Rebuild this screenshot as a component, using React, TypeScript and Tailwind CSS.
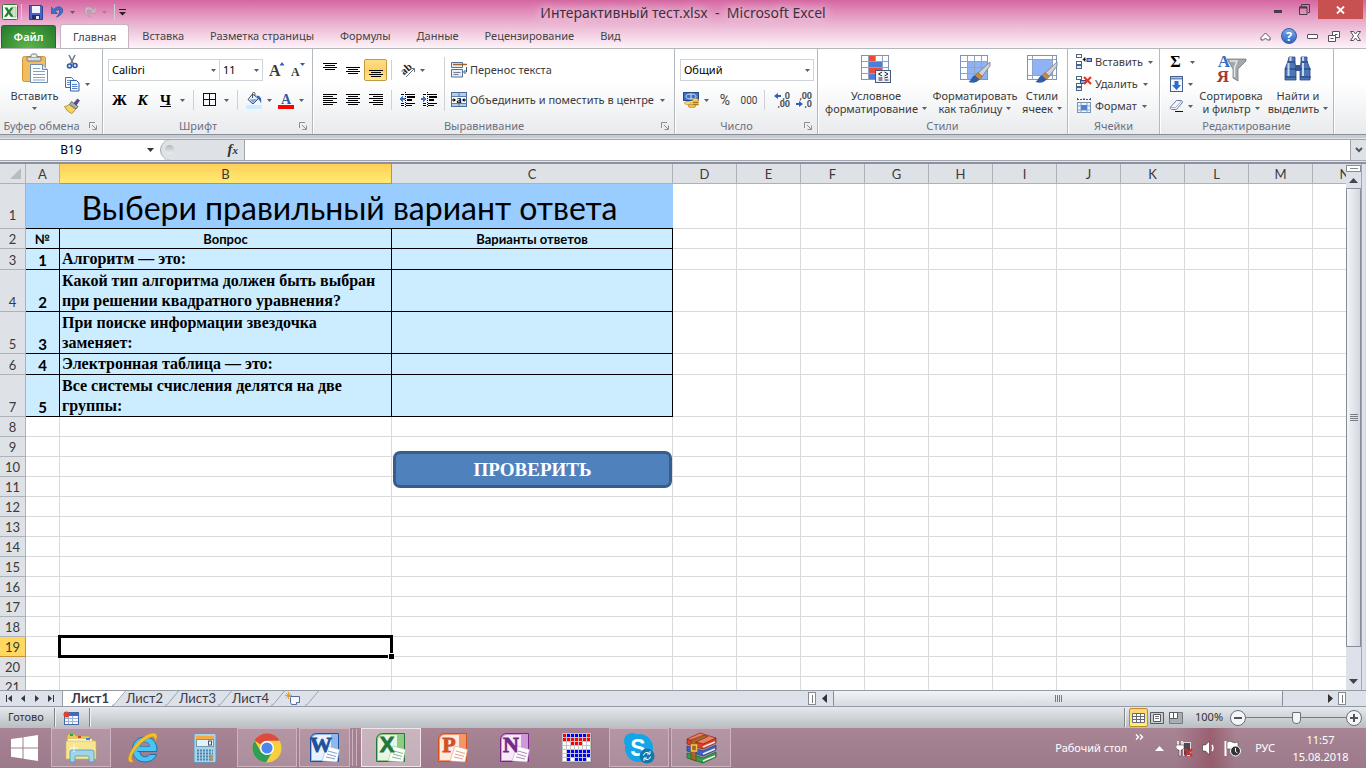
import React, { useState } from 'react';

type IconProps = { className?: string };

const Arrow = ({ className = '' }: IconProps) => (
  <svg className={`shrink-0 ${className}`} width="5" height="3" viewBox="0 0 5 3" aria-hidden="true">
    <path d="M0 0h5L2.5 3z" fill="#5c6066" />
  </svg>
);

/* ---------- Ribbon icons ---------- */

const ExcelSmall = () => (
  <svg width="16" height="16" viewBox="0 0 16 16">
    <rect x=".5" y=".5" width="15" height="15" rx="1" fill="#f4faf1" stroke="#2f7a35" />
    <path d="M10 3h4v10h-4z" fill="#cfe6c8" stroke="#7fb37c" strokeWidth=".6" />
    <path d="M2.500 3.500h3L7 6.300l1.800-2.800h2.600L8.300 8l3.200 4.700h-3L6.700 9.800 4.800 12.700H2L5.300 8z" fill="#1f7d33" />
  </svg>
);

const SaveIcon = () => (
  <svg width="14" height="15" viewBox="0 0 14 15">
    <path d="M.5 .5h12l1 1v13H.5z" fill="#4a64c0" stroke="#2e3f96" />
    <rect x="3" y="1" width="8" height="7" fill="#eef3fc" />
    <rect x="3" y="10" width="8" height="4" fill="#243070" />
    <rect x="7" y="11" width="3" height="3" fill="#e7ecf8" />
  </svg>
);

const UndoIcon = ({ muted = false }: { muted?: boolean }) => (
  <svg width="13" height="14" viewBox="0 0 14 14" className={muted ? '-scale-x-100' : ''}>
    <path d="M0 1.500v7h7L4.800 6.300C6.500 4 9 4 9.300 6c.2 1.800-1 4-3.300 6.500C10 11 13 8 12.500 4.800 12 .8 6.500 0 3 4.300z" fill={muted ? '#c7b3bf' : '#3c74cc'} stroke={muted ? '#ab95a3' : '#244e94'} strokeWidth=".7" />
  </svg>
);

const PasteIcon = () => (
  <svg width="28" height="32" viewBox="0 0 28 32">
    <rect x="1.500" y="3.500" width="23" height="25" rx="2" fill="#f2bd5c" stroke="#cf9537" />
    <rect x="6" y="4" width="14" height="4" rx="1" fill="#d8dde2" stroke="#6f7780" />
    <path d="M10 4V2.500a1.500 1.500 0 0 1 1.500-1.500h3A1.500 1.500 0 0 1 16 2.500V4" fill="#eceff2" stroke="#6f7780" />
    <path d="M9.500 11.500h12l5 5v13h-17z" fill="#fbfdff" stroke="#6d8bb3" />
    <path d="M21.500 11.500v5h5" fill="#dbe6f4" stroke="#6d8bb3" />
    <path d="M12 15.500h7M12 18.500h12M12 21.500h12M12 24.500h12M12 27h12" stroke="#8aa0bd" />
  </svg>
);

const CutIcon = () => (
  <svg width="16" height="16" viewBox="0 0 16 16">
    <path d="M5 1l4.500 9M11 1L6.500 10" stroke="#6b7785" strokeWidth="1.500" fill="none" />
    <circle cx="5.500" cy="12" r="2" fill="#dfe9f9" stroke="#2c56b0" strokeWidth="1.600" />
    <circle cx="11" cy="11.500" r="2" fill="#dfe9f9" stroke="#2c56b0" strokeWidth="1.600" />
  </svg>
);

const CopyIcon = () => (
  <svg width="16" height="16" viewBox="0 0 16 16">
    <path d="M1.500 1.500h6l2 2v8h-8z" fill="#f5f9ff" stroke="#456db0" />
    <path d="M3 4.500h4M3 6.500h4M3 8.500h4" stroke="#6c8fc9" />
    <path d="M6.500 4.500h6l2.500 2.500v8h-8.500z" fill="#f5f9ff" stroke="#3560aa" />
    <path d="M8 8.500h5M8 10.500h5.500M8 12.500h5.500" stroke="#5a81c2" />
  </svg>
);

const BrushIcon = () => (
  <svg width="16" height="16" viewBox="0 0 16 16">
    <path d="M13.500 1l2 1.500L12 7.500 9.500 5.500z" fill="#5a4a9a" stroke="#3b3170" strokeWidth=".6" />
    <path d="M7.500 3.500l6.500 5-2 2.500-6.500-4.500z" fill="#a9afb8" stroke="#4d5258" strokeWidth=".8" />
    <path d="M5 6.500l6.500 4.800q-1.500 3-4 4.200Q3 14 .5 8.500 3 8.500 5 6.500z" fill="#f3d566" stroke="#a98425" strokeWidth=".8" />
  </svg>
);

const BordersIcon = () => (
  <svg width="14" height="14" viewBox="0 0 14 14" shapeRendering="crispEdges">
    <path d="M.5 .5h12v12H.5zM6.500 .5v12M.5 6.500h12" fill="none" stroke="#111" />
  </svg>
);

const FillIcon = () => (
  <svg width="16" height="17" viewBox="0 0 16 17">
    <path d="M6.500 2l6 4.500-5.500 5.500L2 7.500z" fill="#e8f1fb" stroke="#3a4f78" />
    <path d="M3.500 7.500L11.500 7 7 11z" fill="#7fa6dd" />
    <path d="M6.500 6V1.500a1.200 1.200 0 0 1 2.400 0V4" fill="none" stroke="#4a5460" />
    <path d="M10.500 3.500c4.500 0 5.300 4 4.500 8-.9-2.500-2-4-3-4.500z" fill="#2f62b8" />
    <rect y="13" width="16" height="4" fill="#ccecff" />
  </svg>
);

const FontColorIcon = () => (
  <svg width="16" height="18" viewBox="0 0 16 18">
    <text x="8" y="13" textAnchor="middle" fontFamily="Liberation Serif" fontWeight="700" fontSize="14" fill="#38599f">A</text>
    <rect y="14" width="16" height="4" fill="#f00" />
  </svg>
);

type LinesProps = { rows: number[][]; top?: number };
const Lines = ({ rows, top = 2 }: LinesProps) => (
  <svg width="14" height="16" viewBox="0 0 14 16" shapeRendering="crispEdges">
    {rows.map(([x, w], i) => (
      <rect key={i} x={x} y={top + i * 2} width={w} height="1" fill="#000" />
    ))}
  </svg>
);

const OrientIcon = () => (
  <svg width="16" height="16" viewBox="0 0 16 16" className="overflow-visible">
    <text x="2" y="12" transform="rotate(-42 5 10)" fontFamily="Liberation Serif" fontWeight="700" fontSize="11" fill="#222">ab</text>
    <path d="M6 15l8-8M11 6.500h3.500V10" fill="none" stroke="#6d737b" />
  </svg>
);

const IndentIcon = ({ right = false }: { right?: boolean }) => (
  <svg width="16" height="16" viewBox="0 0 16 16" shapeRendering="crispEdges">
    <path d="M2 2.500h3M7 2.500h9M2 13.500h3M7 13.500h6M2 11.500h3M7 11.500h9" stroke="#000" />
    <path d="M8 5h8M8 8h5" stroke="#000" strokeWidth="2" />
    <path d="M6.500 0v16" stroke="#000" strokeDasharray="1 1" />
    <path d={right ? 'M0 6h2V4l4 3-4 3V8H0z' : 'M6 6H4V4L0 7l4 3V8h2z'} fill="#3b6fd0" />
  </svg>
);

const WrapIcon = () => (
  <svg width="17" height="16" viewBox="0 0 17 16">
    <path d="M.5 .5h11v5H.5zM.5 7.500h11v7.500H.5z" fill="#e6eef8" stroke="#55708f" />
    <path d="M2 2.500h14" stroke="#a0632a" strokeWidth="1.500" />
    <path d="M2.500 10.500h7M2.500 12.500h5" stroke="#6d7f94" />
    <path d="M15.500 5v5h-2m1-2l-2 2 2 2" fill="none" stroke="#3c5680" />
  </svg>
);

const MergeIcon = () => (
  <svg width="16" height="16" viewBox="0 0 16 16">
    <rect x=".5" y=".5" width="15" height="14" fill="#b8cce6" stroke="#4c6d9c" />
    <path d="M8 .5v4M8 11.500v3M.5 4.500h15M.5 11.500h15" stroke="#5b7cab" />
    <rect x="1" y="5" width="14" height="6" fill="#fff" />
    <text x="8" y="10.500" textAnchor="middle" fontFamily="Liberation Serif" fontWeight="700" fontSize="10" fill="#000">a</text>
    <path d="M1 8h3M12 8h3" stroke="#000" />
    <path d="M2.500 6l2.500 2-2.500 2zM13.500 6L11 8l2.500 2z" fill="#000" />
  </svg>
);

const MoneyIcon = () => (
  <svg width="17" height="16" viewBox="0 0 17 16">
    <rect x=".5" y=".5" width="15" height="8" fill="#3c72c4" stroke="#244c8d" />
    <ellipse cx="8" cy="4.500" rx="5" ry="2.500" fill="none" stroke="#d5e3f6" />
    <path d="M8 2v5" stroke="#d5e3f6" />
    <ellipse cx="12.500" cy="8" rx="3" ry="1.500" fill="#ffe07a" stroke="#a97818" strokeWidth=".6" />
    <path d="M9.500 8.500h6v5h-6z" fill="#eeb62e" />
    <path d="M9.500 10.500h6M9.500 12.500h6" stroke="#a97818" />
    <ellipse cx="5" cy="11" rx="3.500" ry="1.500" fill="#ffe07a" stroke="#a97818" strokeWidth=".6" />
    <ellipse cx="9" cy="14" rx="4" ry="1.500" fill="#f3c64a" stroke="#a97818" strokeWidth=".6" />
  </svg>
);

const DecimalIcon = ({ less = false }: { less?: boolean }) => (
  <svg width="17" height="16" viewBox="0 0 17 16">
    <g fontFamily="Roboto" fontSize="9" fontWeight="700" fill="#4a4e55" textAnchor="end">
      <text x="16" y="7">{less ? ',00' : ',0'}</text>
      <text x="16" y="15">{less ? ',0' : ',00'}</text>
    </g>
    <path d={less ? 'M0 11h3V9l4 3-4 3v-2H0z' : 'M7 3H4V1L0 4l4 3V5h3z'} fill="#2d5fc0" />
  </svg>
);

const GridBase = ({ children }: { children?: React.ReactNode }) => (
  <svg width="32" height="32" viewBox="0 0 32 32">
    <rect x="1.500" y="2.500" width="27" height="24" fill="#fdfeff" stroke="#7f95b8" />
    <path d="M8.500 3v24M15.500 3v24M22.500 3v24M2 8.500h26M2 14.500h26M2 20.500h26" stroke="#8fa4c4" />
    {children}
  </svg>
);

const PaintBrush = () => (
  <g>
    <path d="M31 9L19 20l4 3.500L31 13z" fill="#cfd2d6" stroke="#74797f" strokeWidth=".8" />
    <path d="M19 19.500l4.500 4-3.500 3.500-4.500-4z" fill="#c58a45" stroke="#8b5a22" strokeWidth=".6" />
    <path d="M16 22.500c-3 0-3 4-6.500 6.500 5 1.500 9 .5 11-2.500z" fill="#2f5fa8" />
  </g>
);

const CondIcon = () => (
  <GridBase>
    <path d="M9 3h6v5H9zM9 15h13v5H9z" fill="#f04a35" />
    <path d="M9 9h13v5H9zM9 21h6v5H9z" fill="#4b7ddb" />
    <rect x="15.500" y="17.500" width="15" height="12" fill="#f1f5fb" stroke="#44597a" />
    <path d="M22 19l-3.500 2 3.500 2M18.500 25h4M18.500 27h4M24.500 19l3.500 2-3.500 2M24.500 25l3.500-1M24.500 27h4" stroke="#222" fill="none" />
  </GridBase>
);

const TableFormatIcon = () => (
  <GridBase>
    <path d="M9 9h6v5H9zM16 9h6v5h-6zM23 9h5v5h-5zM9 15h6v5H9zM16 15h6v5h-6zM9 21h6v5H9zM16 21h6v5h-6zM23 15h5v11h-5z" fill="#8fb3f5" />
    <PaintBrush />
  </GridBase>
);

const CellStyleIcon = () => (
  <svg width="32" height="32" viewBox="0 0 32 32">
    <rect x="1.500" y="2.500" width="29" height="24" fill="#fdfeff" stroke="#7f95b8" />
    <path d="M6.500 3v24M26.500 3v24M2 6.500h28M2 22.500h28" stroke="#8fa4c4" />
    <rect x="7" y="7" width="19" height="15" fill="#8fb3f5" />
    <PaintBrush />
  </svg>
);

const CellsIcon = ({ kind }: { kind: 'insert' | 'delete' | 'format' }) => (
  <svg width="16" height="16" viewBox="0 0 16 16">
    {kind === 'format' ? (
      <>
        <path d="M1 1.500h14M1.500 0v3M8 0v3M14.500 0v3" stroke="#35557e" strokeDasharray="2 1" />
        <rect x="1.500" y="4.500" width="13" height="10" fill="#edf3fb" stroke="#7c93b3" />
        <path d="M5 5v10M11 5v10M2 8h12M2 12h12" stroke="#8ba3c5" />
        <rect x="5" y="7" width="6" height="5" fill="#4e7fd4" />
      </>
    ) : (
      <>
        <rect x=".5" y=".5" width="5" height="3" fill="#fff" stroke="#4c6585" />
        <rect x=".5" y="7.500" width="5" height="3" fill="#fff" stroke="#4c6585" />
        <rect x=".5" y="11.500" width="5" height="3" fill="#dce8f7" stroke="#4c6585" />
        {kind === 'insert' ? (
          <>
            <path d="M7 5.500h3M9 3.500L7 5.500 9 7.500z" fill="#111" stroke="#111" strokeWidth=".6" />
            <rect x="11" y="4.500" width="4.500" height="3" fill="#89aee8" stroke="#2f4f85" />
          </>
        ) : (
          <>
            <rect x="4.500" y="4.500" width="5" height="3" fill="#89aee8" stroke="#2f4f85" />
            <path d="M8 1l7 7M15 1L8 8" stroke="#e0392b" strokeWidth="2.200" />
          </>
        )}
      </>
    )}
  </svg>
);

const FillDownIcon = () => (
  <svg width="14" height="16" viewBox="0 0 14 16">
    <rect x=".5" y=".5" width="12" height="15" fill="#f3f7fd" stroke="#44618d" />
    <path d="M1 2.500h11" stroke="#6d8dbb" strokeWidth="2" />
    <path d="M4.500 5h4v4h2.500l-4.500 5L2 9h2.500z" fill="#2f68cf" />
  </svg>
);

const EraserIcon = () => (
  <svg width="15" height="14" viewBox="0 0 15 14">
    <path d="M7.500 1.500h5q1.500 1 .5 2.500l-5.500 6.500h-5Q.5 9.500 1.500 8z" fill="#f4f6fb" stroke="#6b7ea3" />
    <path d="M1.500 8.500h5l6-6.500" fill="none" stroke="#a3b1cc" />
    <path d="M6 12.500h8" stroke="#111" />
  </svg>
);

const SortIcon = () => (
  <svg width="32" height="32" viewBox="0 0 32 32">
    <text x="9" y="14" textAnchor="middle" fontFamily="Liberation Serif" fontWeight="700" fontSize="17" fill="#3b6cb9">A</text>
    <text x="8" y="29" textAnchor="middle" fontFamily="Liberation Serif" fontWeight="700" fontSize="17" fill="#a23b35">Я</text>
    <path d="M12 6h19v2l-8 8v12l-5-3v-9z" fill="#a4a8ad" stroke="#74797f" strokeWidth=".8" />
    <path d="M15 8h7l-2.500 7v9" fill="none" stroke="#e3e5e8" strokeWidth="1.500" />
  </svg>
);

const FindIcon = () => (
  <svg width="30" height="32" viewBox="0 0 30 32">
    <path d="M6 4h6v5l1 7v11H2V16l3-8zM18 4h6v4l3 8v11H17V16l1-7z" fill="#4d76b8" stroke="#28467c" strokeWidth=".8" />
    <rect x="12" y="12" width="6" height="6" fill="#35578f" />
    <path d="M5 9h7M18 9h7M2 16h11M17 16h11M2 24h11M17 24h11" stroke="#203a69" />
    <path d="M5.500 10v13M20 10v13M7.500 4v4M20 4v4" stroke="#c4d7f3" strokeWidth="2" />
  </svg>
);

const Launcher = () => (
  <svg width="9" height="9" viewBox="0 0 9 9" aria-hidden="true">
    <path d="M.5 6V.5H6M3 3l4 4M7.500 3.500v4h-4" fill="none" stroke="#8b9098" />
  </svg>
);

/* ---------- Ribbon building blocks ---------- */

interface GroupProps {
  title: string;
  className: string;
  launcher?: boolean;
  children: React.ReactNode;
}

const Group = ({ title, className, launcher, children }: GroupProps) => (
  <section className={`flex shrink-0 flex-col border-r border-[#b4b9bf] shadow-[1px_0_0_#fff] ${className}`}>
    <div className="flex h-[69px] px-[5px]">{children}</div>
    <div className="flex h-4 items-center text-[#6a7080]">
      <span className={`flex-1 text-center ${launcher ? 'pr-[6px]' : ''}`}>{title}</span>
      {launcher && <button aria-label={`${title}: параметры`} className="mr-1"><Launcher /></button>}
    </div>
  </section>
);

const Sep = ({ className = 'h-5' }: IconProps) => <span className={`w-px shrink-0 bg-[#cdd1d6] ${className}`} />;

const StatusSep = ({ className = '' }: IconProps) => (
  <span className={`h-[19px] w-px shrink-0 bg-[#80858b] shadow-[1px_0_0_#eef0f2] ${className}`} />
);

interface IconButtonProps {
  label: string;
  className?: string;
  children: React.ReactNode;
}

const IconButton = ({ label, className = 'w-[23px]', children }: IconButtonProps) => (
  <button aria-label={label} title={label} className={`flex h-[22px] shrink-0 items-center justify-center ${className}`}>
    {children}
  </button>
);

interface LargeButtonProps {
  icon: React.ReactNode;
  lines: string[];
  className: string;
}

const LargeButton = ({ icon, lines, className }: LargeButtonProps) => (
  <button className={`flex shrink-0 flex-col items-center pt-1 leading-[13px] whitespace-nowrap ${className}`}>
    <span className="flex h-9 items-start">{icon}</span>
    <span>{lines[0]}</span>
    <span className="flex items-center gap-1">{lines[1]}<Arrow /></span>
  </button>
);

const SmallButton = ({ icon, label }: { icon: React.ReactNode; label: string }) => (
  <button className="flex h-[22px] items-center gap-[3px]">
    {icon}
    <span>{label}</span>
    <Arrow className="ml-[2px]" />
  </button>
);

const CENTER_LINES = [[0, 14], [2, 10], [0, 14], [2, 10], [0, 14], [2, 10]];
const LEFT_LINES = [[0, 14], [0, 10], [0, 14], [0, 10], [0, 14], [0, 10]];
const RIGHT_LINES = [[0, 14], [4, 10], [0, 14], [4, 10], [0, 14], [4, 10]];
const FOUR_LINES = [[0, 14], [2, 10], [0, 14], [2, 10]];

const Ribbon = () => (
  <div className="flex h-[86px] shrink-0 overflow-hidden border-b border-[#8b9097] bg-linear-to-b from-white from-40% to-[#e8eaed] text-[11px] text-[#3b3b3b]">
    <Group title="Буфер обмена" className="w-[103px]" launcher>
      <button className="flex w-[59px] flex-col items-center pt-1 leading-[13px]">
        <span className="flex h-9"><PasteIcon /></span>
        <span>Вставить</span>
        <span className="flex h-[13px] items-center"><Arrow /></span>
      </button>
      <div className="flex flex-col pt-[2px]">
        <IconButton label="Вырезать" className="w-4"><CutIcon /></IconButton>
        <IconButton label="Копировать" className="w-[26px] gap-[5px]"><CopyIcon /><Arrow /></IconButton>
        <IconButton label="Формат по образцу" className="w-4"><BrushIcon /></IconButton>
      </div>
    </Group>

    <Group title="Шрифт" className="w-[210px]" launcher>
      <div className="flex flex-col gap-2 pt-[10px]">
        <div className="flex">
          <button aria-label="Шрифт Calibri" className="flex h-[22px] w-28 items-center justify-between border border-[#d0d3d8] bg-white px-[3px] text-black">
            Calibri<Arrow />
          </button>
          <button aria-label="Размер шрифта 11" className="-ml-px flex h-[22px] w-11 items-center justify-between border border-[#d0d3d8] bg-white px-[3px] text-black">
            11<Arrow />
          </button>
          <IconButton label="Увеличить размер шрифта" className="ml-1 w-5">
            <svg width="16" height="16" viewBox="0 0 16 16">
              <text x="0" y="14" fontFamily="Liberation Serif" fontWeight="700" fontSize="16" fill="#3a3a3a">A</text>
              <path d="M10.500 3.500h5L13 0z" fill="#2f5fb5" />
            </svg>
          </IconButton>
          <IconButton label="Уменьшить размер шрифта" className="w-6">
            <svg width="16" height="16" viewBox="0 0 16 16">
              <text x="0" y="14" fontFamily="Liberation Serif" fontWeight="700" fontSize="12" fill="#3a3a3a">A</text>
              <path d="M9 1h5l-2.500 3z" fill="#2f5fb5" />
            </svg>
          </IconButton>
        </div>
        <div className="flex items-center font-['Liberation_Serif',serif] text-[15px] font-bold text-black">
          <IconButton label="Полужирный">Ж</IconButton>
          <IconButton label="Курсив"><i>К</i></IconButton>
          <IconButton label="Подчеркнутый" className="w-[37px] gap-[9px]"><u>Ч</u><Arrow /></IconButton>
          <Sep className="ml-[2px] h-5" />
          <IconButton label="Границы" className="ml-px w-[41px] gap-[7px]"><BordersIcon /><Arrow /></IconButton>
          <Sep className="ml-px h-5" />
          <IconButton label="Цвет заливки" className="ml-[5px] w-8 gap-[5px]"><FillIcon /><Arrow /></IconButton>
          <IconButton label="Цвет текста" className="w-8 gap-[5px]"><FontColorIcon /><Arrow /></IconButton>
        </div>
      </div>
    </Group>

    <Group title="Выравнивание" className="w-[362px]" launcher>
      <div className="flex flex-col gap-2 pt-[10px]">
        <div className="flex items-center">
          <IconButton label="По верхнему краю"><Lines rows={FOUR_LINES} top={1} /></IconButton>
          <IconButton label="Выровнять по середине"><Lines rows={FOUR_LINES} top={5} /></IconButton>
          <IconButton label="По нижнему краю" className="w-[23px] rounded-[2px] border border-[#c29a43] bg-linear-to-b from-[#fbdf85] via-[#ffd062] to-[#ffe994]">
            <Lines rows={FOUR_LINES} top={8} />
          </IconButton>
          <Sep className="ml-1 h-5" />
          <IconButton label="Ориентация" className="ml-[6px] w-[28px] gap-1"><OrientIcon /><Arrow /></IconButton>
        </div>
        <div className="flex items-center">
          <IconButton label="По левому краю"><Lines rows={LEFT_LINES} /></IconButton>
          <IconButton label="По центру"><Lines rows={CENTER_LINES} /></IconButton>
          <IconButton label="По правому краю"><Lines rows={RIGHT_LINES} /></IconButton>
          <Sep className="ml-1 h-5" />
          <IconButton label="Уменьшить отступ" className="ml-1 w-[22px]"><IndentIcon /></IconButton>
          <IconButton label="Увеличить отступ" className="w-[22px]"><IndentIcon right /></IconButton>
        </div>
      </div>
      <Sep className="mt-2 ml-1 h-[54px]" />
      <div className="ml-[6px] flex flex-col gap-2 pt-[10px]">
        <button className="flex h-[22px] items-center gap-[2px]"><WrapIcon />Перенос текста</button>
        <button className="flex h-[22px] items-center gap-[3px] whitespace-nowrap"><MergeIcon />Объединить и поместить в центре<Arrow className="ml-[3px]" /></button>
      </div>
    </Group>

    <Group title="Число" className="w-[143px]" launcher>
      <div className="flex flex-col gap-2 pt-[10px]">
        <button className="flex h-[22px] w-[134px] items-center justify-between border border-[#d0d3d8] bg-white px-[3px] text-black">
          Общий<Arrow />
        </button>
        <div className="flex items-center">
          <IconButton label="Денежный формат" className="w-8 gap-1"><MoneyIcon /><Arrow /></IconButton>
          <IconButton label="Процентный формат" className="w-[26px] font-['Roboto',sans-serif] text-sm">%</IconButton>
          <IconButton label="Формат с разделителями" className="w-[22px] font-['Roboto',sans-serif] text-[10px]">000</IconButton>
          <Sep className="ml-1 h-5" />
          <IconButton label="Увеличить разрядность" className="ml-[6px] w-[22px]"><DecimalIcon /></IconButton>
          <IconButton label="Уменьшить разрядность" className="w-[22px]"><DecimalIcon less /></IconButton>
        </div>
      </div>
    </Group>

    <Group title="Стили" className="w-[250px]">
      <LargeButton className="w-[106px]" icon={<CondIcon />} lines={['Условное', 'форматирование']} />
      <LargeButton className="w-[92px]" icon={<TableFormatIcon />} lines={['Форматировать', 'как таблицу']} />
      <LargeButton className="w-[42px]" icon={<CellStyleIcon />} lines={['Стили', 'ячеек']} />
    </Group>

    <Group title="Ячейки" className="w-[92px]">
      <div className="flex flex-col pt-[2px] pl-[3px]">
        <SmallButton icon={<CellsIcon kind="insert" />} label="Вставить" />
        <SmallButton icon={<CellsIcon kind="delete" />} label="Удалить" />
        <SmallButton icon={<CellsIcon kind="format" />} label="Формат" />
      </div>
    </Group>

    <Group title="Редактирование" className="w-[174px]">
      <div className="flex w-8 shrink-0 flex-col pt-[2px]">
        <IconButton label="Сумма" className="w-8 gap-[9px] pl-[3px] font-['Liberation_Serif',serif] text-base font-bold text-black">Σ<Arrow /></IconButton>
        <IconButton label="Заполнить" className="w-8 gap-1"><FillDownIcon /><Arrow /></IconButton>
        <IconButton label="Очистить" className="w-8 gap-1"><EraserIcon /><Arrow /></IconButton>
      </div>
      <LargeButton className="w-[68px]" icon={<SortIcon />} lines={['Сортировка', 'и фильтр']} />
      <LargeButton className="w-[66px]" icon={<FindIcon />} lines={['Найти и', 'выделить']} />
    </Group>
  </div>
);

/* ---------- Window header ---------- */

const TABS = ['Главная', 'Вставка', 'Разметка страницы', 'Формулы', 'Данные', 'Рецензирование', 'Вид'];

const TitleBar = () => (
  <div className="relative flex h-[25px] items-start justify-between">
    <div className="flex h-6 items-center pl-[2px]">
      <ExcelSmall />
      <Sep className="ml-[3px] h-4" />
      <button aria-label="Сохранить" className="ml-[7px]"><SaveIcon /></button>
      <button aria-label="Отменить" className="ml-2 flex items-center gap-[6px]"><UndoIcon /><Arrow /></button>
      <button aria-label="Вернуть" disabled className="ml-2 flex items-center gap-[6px]"><UndoIcon muted /><Arrow className="opacity-40" /></button>
      <Sep className="ml-[7px] h-4" />
      <button aria-label="Настройка панели быстрого доступа" className="ml-1">
        <svg width="7" height="8" viewBox="0 0 7 8"><path d="M0 1.500h7" stroke="#222" /><path d="M0 4h7L3.500 7.500z" fill="#222" /></svg>
      </button>
    </div>
    <h1 className="pointer-events-none absolute inset-x-0 top-0 text-center text-[14px] leading-[25px] text-[#3d3040] [text-shadow:0_0_8px_#f7d9e9,0_0_12px_#f7d9e9]">
      Интерактивный тест.xlsx&nbsp; -&nbsp; Microsoft Excel
    </h1>
    <div className="flex h-[19px] pr-[3px]">
      <button aria-label="Свернуть" className="flex w-[26px] items-center justify-center pt-1"><span className="h-[3px] w-2 bg-[#4b3a45]" /></button>
      <button aria-label="Восстановить" className="flex w-[27px] items-center justify-center">
        <svg width="11" height="11" viewBox="0 0 11 11"><path d="M2.500 2V.5h8v8H9M.5 3h7.500v7.500H.5z" fill="none" stroke="#4b3a45" /><path d="M.5 3.500H8" stroke="#4b3a45" strokeWidth="2" /></svg>
      </button>
      <button aria-label="Закрыть" className="flex w-[45px] items-center justify-center bg-[#c75050]">
        <svg width="9" height="8" viewBox="0 0 9 8"><path d="M1 .5l7 7M8 .5l-7 7" stroke="#fff" strokeWidth="1.800" /></svg>
      </button>
    </div>
  </div>
);

const TabRow = () => {
  const [active, setActive] = useState('Главная');
  return (
    <nav className="flex h-6 items-end text-[11px] text-[#444]">
      <button className="ml-px h-[23px] w-[55px] rounded-t-[3px] border border-b-0 border-[#1f6a2c] bg-radial-[at_50%_100%] from-[#5fb548] to-[#237a2c] font-semibold text-white">
        Файл
      </button>
      <div className="ml-1 flex h-full flex-1">
        {TABS.map((tab) => (
          <button
            key={tab}
            onClick={() => setActive(tab)}
            className={`h-6 pt-px ${active === tab ? 'rounded-t-[3px] border border-b-0 border-[#c9b3c0] bg-white px-3' : 'px-[13px]'}`}
          >
            {tab}
          </button>
        ))}
      </div>
      <div className="flex h-full items-center gap-[10px] pr-[5px]">
        <button aria-label="Свернуть ленту">
          <svg width="11" height="9" viewBox="0 0 11 9"><path d="M1 5.500L5.500 1 10 5.500V8H7.500L5.500 6 3.500 8H1z" fill="#fff" stroke="#57505a" /></svg>
        </button>
        <button aria-label="Справка" className="flex size-4 items-center justify-center rounded-full border border-[#2f5ca8] bg-linear-to-b from-[#7ba6e6] to-[#2d66c0] text-[13px] leading-none font-bold text-white">?</button>
        <button aria-label="Свернуть окно" className="h-[5px] w-[11px] rounded-[1px] border border-[#57505a] bg-white" />
        <button aria-label="Восстановить окно">
          <svg width="12" height="11" viewBox="0 0 12 11"><path d="M4.500 .5h7v6h-7z" fill="#fff" stroke="#57505a" /><path d="M.5 4.500h7v6h-7z" fill="#fff" stroke="#57505a" /><path d="M2.500 7.500h3M7 3.500h2.500" fill="none" stroke="#57505a" /></svg>
        </button>
        <button aria-label="Закрыть окно">
          <svg width="11" height="10" viewBox="0 0 11 10"><path d="M.5 .5h3l2 2.500 2-2.500h3L7.500 5l3 4.500h-3L5.500 7l-2 2.500h-3L3.500 5z" fill="#fff" stroke="#57505a" /></svg>
        </button>
      </div>
    </nav>
  );
};

const FormulaBar = () => (
  <div className="flex h-7 shrink-0 items-center border-b border-[#8b8fa0] bg-[#e3e6ec] pt-[2px] shadow-[inset_0_3px_0_#c6cbd2]">
    <div className="flex h-[22px] w-full border-y border-[#a0a4ab] bg-[#dee2e7]">
      <input aria-label="Поле имени" defaultValue="B19" className="w-[142px] bg-white text-center text-xs text-black outline-none" />
      <button aria-label="Список имён" className="flex w-[22px] items-center justify-start bg-white pl-[5px]">
        <svg width="7" height="4" viewBox="0 0 7 4"><path d="M0 0h7L3.500 4z" fill="#333" /></svg>
      </button>
      <div className="-ml-1 flex w-[84px] items-center justify-between rounded-l-full border-l border-[#a0a4ab] bg-[#dee2e7] pr-[6px] pl-1">
        <span className="size-[9px] rounded-full bg-linear-to-b from-[#b4b8bd] to-[#eef0f2]" />
        <button aria-label="Вставить функцию" className="font-['Liberation_Serif',serif] text-[15px] leading-none font-bold text-[#333] italic">
          f<span className="text-[11px]">x</span>
        </button>
      </div>
      <input aria-label="Строка формул" className="min-w-0 flex-1 border-l border-[#a0a4ab] bg-white px-1 text-xs outline-none" />
      <button aria-label="Развернуть строку формул" className="flex w-4 items-center justify-center border-l border-[#a0a4ab] bg-[#dee2e7]">
        <svg width="8" height="6" viewBox="0 0 8 6"><path d="M1 1l3 3 3-3" fill="none" stroke="#555" strokeWidth="2" /></svg>
      </button>
    </div>
  </div>
);

/* ---------- Sheet ---------- */

const COLUMNS = ['A', 'B', 'C', 'D', 'E', 'F', 'G', 'H', 'I', 'J', 'K', 'L', 'M', 'N'];
const BLANK_COLUMNS = COLUMNS.slice(3);
const EMPTY_ROWS = [8, 9, 10, 11, 12, 13, 14, 15, 16, 17, 18, 19, 20, 21];

const QUESTIONS = [
  { row: 3, num: 1, text: 'Алгоритм — это:', height: 'h-[21px]' },
  { row: 4, num: 2, text: 'Какой тип алгоритма должен быть выбран при решении квадратного уравнения?', height: 'h-[42px]' },
  { row: 5, num: 3, text: 'При поиске информации звездочка заменяет:', height: 'h-[42px]' },
  { row: 6, num: 4, text: 'Электронная таблица — это:', height: 'h-[21px]' },
  { row: 7, num: 5, text: 'Все системы счисления делятся на две группы:', height: 'h-[42px]' },
];

const RowHead = ({ n, selected = false }: { n: number; selected?: boolean }) => (
  <th
    scope="row"
    className={`border-r border-b px-0 pt-0 text-center align-bottom text-[13px] leading-[18px] font-normal text-[#3a3a3a] ${n === 1 ? 'pb-1' : 'pb-0'} ${
      selected ? 'border-[#c59334] bg-[#ffd95f]' : 'border-[#adb2b8] bg-[#dee2e7]'
    }`}
  >
    {n}
  </th>
);

const Blanks = () => (
  <>
    {BLANK_COLUMNS.map((c) => (
      <td key={c} className="border-r border-b border-[#d8dadc]" />
    ))}
  </>
);

const Sheet = () => (
  <div className="min-w-0 flex-1 overflow-hidden bg-white">
    <table className="w-[1377px] table-fixed border-separate border-spacing-0 font-['Lato',sans-serif] text-black">
      <colgroup>
        <col className="w-[26px]" />
        <col className="w-[34px]" />
        <col className="w-[332px]" />
        <col className="w-[281px]" />
        {BLANK_COLUMNS.map((c) => <col key={c} className="w-[64px]" />)}
      </colgroup>
      <thead>
        <tr className="h-5 text-[13px] text-[#3a3a3a]">
          <td className="border-r border-b border-[#adb2b8] bg-[#dee2e7] p-0">
            <svg className="mr-1 ml-auto" width="11" height="11" viewBox="0 0 11 11"><path d="M11 0v11H0z" fill="#b9bdc2" /></svg>
          </td>
          {COLUMNS.map((c) => (
            <th
              key={c}
              scope="col"
              className={`border-r border-b p-0 leading-[18px] font-normal ${
                c === 'B' ? 'border-[#c59334] bg-linear-to-b from-[#ffcf58] to-[#ffeb70]' : 'border-[#adb2b8] bg-[#dee2e7]'
              }`}
            >
              {c}
            </th>
          ))}
        </tr>
      </thead>
      <tbody>
        <tr className="h-[45px]">
          <RowHead n={1} />
          <td colSpan={3} className="border-b border-black bg-[#99ccff] p-0 text-center align-bottom text-[32px] leading-[40px]">
            Выбери правильный вариант ответа
          </td>
          <Blanks />
        </tr>
        <tr className="h-5 text-[13px] leading-[18px]">
          <RowHead n={2} />
          {['№', 'Вопрос', 'Варианты ответов'].map((h) => (
            <th key={h} className="border-r border-b border-black bg-[#ccecff] p-0">{h}</th>
          ))}
          <Blanks />
        </tr>
        {QUESTIONS.map((q) => (
          <tr key={q.row} className={q.height}>
            <RowHead n={q.row} />
            <td className="border-r border-b border-black bg-[#ccecff] p-0 text-center align-bottom text-[15px] leading-[18px] font-bold">{q.num}</td>
            <td className="border-r border-b border-black bg-[#ccecff] py-0 pr-2 pl-[2px] align-bottom font-['Liberation_Serif',serif] text-base leading-5 font-bold">{q.text}</td>
            <td className="border-r border-b border-black bg-[#ccecff]" />
            <Blanks />
          </tr>
        ))}
        {EMPTY_ROWS.map((n) => (
          <tr key={n} className="h-5">
            <RowHead n={n} selected={n === 19} />
            <td className="border-r border-b border-[#d8dadc]" />
            <td className="relative border-r border-b border-[#d8dadc] p-0">
              {n === 19 && (
                <div className="absolute -inset-[2px] z-10 border-[3px] border-black">
                  <span className="absolute -right-1 -bottom-1 size-[6px] border-t border-l border-white bg-black" />
                </div>
              )}
            </td>
            <td className="relative border-r border-b border-[#d8dadc] p-0">
              {n === 9 && (
                <button className="absolute top-[14px] left-px z-10 h-[37px] w-[279px] rounded-[7px] border-[3px] border-[#385d8a] bg-[#4f81bd] font-['Liberation_Serif',serif] text-[19px] leading-none font-bold text-white">
                  ПРОВЕРИТЬ
                </button>
              )}
            </td>
            <Blanks />
          </tr>
        ))}
      </tbody>
    </table>
  </div>
);

const VerticalScroll = () => (
  <div className="flex w-5 shrink-0 border-r border-[#d4d7dc] bg-[#dde1e9]">
    <div className="flex w-4 flex-col items-center border-r border-[#9fa5ae]">
      <span className="mt-px flex h-[7px] w-[15px] items-center justify-center border border-[#888d95] bg-white"><span className="h-px w-2 bg-[#888]" /></span>
      <button aria-label="Вверх" className="flex h-[17px] w-full items-center justify-center border-b border-[#8d939c]">
        <svg width="9" height="5" viewBox="0 0 9 5"><path d="M0 5h9L4.500 0z" fill="#444" /></svg>
      </button>
      <div className="flex w-full flex-1 flex-col items-center justify-center gap-px rounded-[1px] border border-t-0 border-[#868d97] bg-linear-to-r from-[#f2f4f8] to-[#d3d7df]">
        {[0, 1, 2, 3].map((i) => <span key={i} className="h-px w-2 bg-[#777c84]" />)}
      </div>
      <span className="h-[26px]" />
      <button aria-label="Вниз" className="flex h-[17px] w-full items-center justify-center">
        <svg width="9" height="5" viewBox="0 0 9 5"><path d="M0 0h9L4.500 5z" fill="#444" /></svg>
      </button>
    </div>
  </div>
);

const Slant = ({ white = false }: { white?: boolean }) => (
  <svg className="shrink-0" width="14" height="15" viewBox="0 0 14 15" aria-hidden="true">
    {white && <path d="M0 0h14L4 12q-2 2.500-4 2.500z" fill="#fff" />}
    <path d="M13.500 0L4 11.500q-2 3-4 3" fill="none" stroke="#9ba3af" />
  </svg>
);

const NAV_ARROWS = [
  { label: 'Первый лист', d: 'M1 0h1v7H1zM7 0v7L3 3.500z' },
  { label: 'Предыдущий лист', d: 'M6 0v7L2 3.500z' },
  { label: 'Следующий лист', d: 'M2 0v7l4-3.500z' },
  { label: 'Последний лист', d: 'M6 0h1v7H6zM1 0v7l4-3.500z' },
];

const SheetBar = () => (
  <div className="flex h-[17px] shrink-0 border-t border-b border-[#949aa6] bg-[#dde1e9] font-['Lato',sans-serif] text-[13px] leading-[15px] text-[#3c3c46]">
    <div className="flex w-[62px] items-center gap-[6px] pl-[5px]">
      {NAV_ARROWS.map((a) => (
        <button key={a.label} aria-label={a.label}>
          <svg width="8" height="7" viewBox="0 0 8 7"><path d={a.d} fill="#333840" /></svg>
        </button>
      ))}
    </div>
    <button className="w-[50px] border-l border-[#949aa6] bg-white text-right font-bold"><span className="pr-[3px]">Лист1</span></button>
    <Slant white />
    {['Лист2', 'Лист3', 'Лист4'].map((s) => (
      <React.Fragment key={s}>
        <button className="w-[39px] text-left">{s}</button>
        <Slant />
      </React.Fragment>
    ))}
    <button aria-label="Вставить лист" className="flex w-5 items-center">
      <svg width="16" height="14" viewBox="0 0 16 14">
        <path d="M5.500 4.500h9v6h-3v2h-5l-1-2z" fill="#f4f7fc" stroke="#566b9b" />
        <path d="M3.500 0v7M0 3.500h7M1 1l5 5M6 1L1 6" stroke="#e5a02e" />
      </svg>
    </button>
    <Slant />
    <span className="flex-1" />
    <div className="flex w-[538px] shrink-0">
      <span className="my-px flex w-2 items-center justify-center border border-[#868c96] bg-white"><span className="h-2 w-px bg-[#777]" /></span>
      <button aria-label="Влево" className="flex w-4 items-center justify-center">
        <svg width="5" height="9" viewBox="0 0 5 9"><path d="M5 0v9L0 4.500z" fill="#333" /></svg>
      </button>
      <div className="ml-px flex w-[450px] items-center justify-center gap-px rounded-[1px] border-x border-[#868d97] bg-linear-to-b from-[#f2f4f8] to-[#d6dae1]">
        {[0, 1, 2, 3].map((i) => <span key={i} className="h-[7px] w-px bg-[#777c84]" />)}
      </div>
      <span className="flex-1" />
      <button aria-label="Вправо" className="flex w-4 items-center justify-center">
        <svg width="5" height="9" viewBox="0 0 5 9"><path d="M0 0v9l5-4.500z" fill="#333" /></svg>
      </button>
      <span className="my-px flex w-2 items-center justify-center border border-[#868c96] bg-white"><span className="h-2 w-px bg-[#777]" /></span>
    </div>
    <span className="w-5 shrink-0" />
  </div>
);

const StatusBar = () => {
  const [zoom, setZoom] = useState(100);
  return (
    <div className="flex h-[21px] shrink-0 items-center bg-linear-to-b from-[#e6e9ec] to-[#b9bec3] text-[11px] text-[#333]">
      <span className="w-[46px] pl-2">Готово</span>
      <StatusSep className="ml-2" />
      <button aria-label="Запись макроса" className="ml-2">
        <svg width="16" height="14" viewBox="0 0 16 14">
          <rect x="1.500" y="1.500" width="14" height="12" fill="#f5f8fd" stroke="#4768a8" />
          <path d="M2 3.500h13" stroke="#3e6cc0" strokeWidth="3" />
          <path d="M2 7.500h13M2 10.500h13M5.500 5v8M9.500 5v8" stroke="#9db1d6" />
          <circle cx="3.500" cy="3.500" r="3" fill="#d64531" />
        </svg>
      </button>
      <StatusSep className="ml-[10px]" />
      <span className="flex-1" />
      <StatusSep />
      <button aria-label="Обычный" className="ml-1 flex h-[19px] w-[19px] items-center justify-center rounded-[2px] border border-[#c08d2a] bg-linear-to-b from-[#fbd674] to-[#fff07a]">
        <svg width="13" height="10" viewBox="0 0 13 10"><path d="M.5 .5h12v9H.5zM4.500 .5v9M8.500 .5v9M.5 3.500h12M.5 6.500h12" fill="#fff" stroke="#666b73" /></svg>
      </button>
      <button aria-label="Разметка страницы" className="ml-[2px]">
        <svg width="14" height="12" viewBox="0 0 14 12"><path d="M.5 .5h13v11H.5z" fill="#c9cdd2" stroke="#555a62" /><path d="M3.500 2.500h7v7h-7z" fill="#fff" stroke="#555a62" /><path d="M5 4.500h4M5 6.500h4" stroke="#777" /></svg>
      </button>
      <button aria-label="Страничный режим" className="ml-[5px]">
        <svg width="14" height="12" viewBox="0 0 14 12"><path d="M.5 .5h13v11H.5z" fill="#a9aeb5" stroke="#777c84" /><path d="M.5 .5h4v6h-4zM4.500 .5h4v6h-4z" fill="#fff" stroke="#555a62" /></svg>
      </button>
      <button className="ml-3 w-[28px] text-left">{zoom}%</button>
      <button aria-label="Уменьшить" onClick={() => setZoom(zoom - 10)} className="ml-[7px] flex size-4 items-center justify-center rounded-full border border-[#6a6f76] bg-[#f4f5f7]"><span className="h-[2px] w-2 bg-[#555]" /></button>
      <div className="flex w-[100px] items-center bg-[linear-gradient(#777c84,#777c84)] bg-[length:100%_1px] bg-center bg-no-repeat">
        <input
          type="range"
          min={0}
          max={200}
          value={zoom}
          aria-label="Масштаб"
          onChange={(e) => setZoom(Number(e.target.value))}
          className="h-3 w-full appearance-none bg-transparent [&::-webkit-slider-thumb]:h-3 [&::-webkit-slider-thumb]:w-[9px] [&::-webkit-slider-thumb]:appearance-none [&::-webkit-slider-thumb]:rounded-t-[1px] [&::-webkit-slider-thumb]:rounded-b-[4px] [&::-webkit-slider-thumb]:border [&::-webkit-slider-thumb]:border-[#6a6f76] [&::-webkit-slider-thumb]:bg-[#f4f5f7]"
        />
      </div>
      <button aria-label="Увеличить" onClick={() => setZoom(zoom + 10)} className="mr-1 flex size-4 items-center justify-center rounded-full border border-[#6a6f76] bg-[#f4f5f7]">
        <svg width="8" height="8" viewBox="0 0 8 8"><path d="M4 0v8M0 4h8" stroke="#555" strokeWidth="2" /></svg>
      </button>
    </div>
  );
};

/* ---------- Taskbar ---------- */

const ExplorerIcon = () => (
  <svg width="32" height="32" viewBox="0 0 32 32">
    <path d="M2 5l1-3h7l1 2h13l1 4h4v18H2z" fill="#e4c95f" stroke="#b89a3a" strokeWidth=".6" />
    <path d="M3 7h24v3H3z" fill="#fdf9e4" />
    <path d="M5 2h3v2H5z" fill="#2aa53c" />
    <path d="M13 4h3v2h-3z" fill="#d2402e" />
    <path d="M21 6h4v2h-4z" fill="#3585d6" />
    <path d="M1 9h30v18H1z" fill="#f7e592" stroke="#cdb150" strokeWidth=".6" />
    <path d="M5 30V20q0-2 2-2h20q2 0 2 2v10h-5v-5q0-1-1-1H11q-1 0-1 1v5z" fill="#9fd4ea" stroke="#4b99bd" strokeWidth=".8" />
    <path d="M9 12v8M5 16h8" stroke="#fffbe0" />
  </svg>
);

const IeIcon = () => (
  <svg width="32" height="32" viewBox="0 0 32 32">
    <path d="M10.500 19.500H30C30.500 10 25 5 18 5 10.500 5 5.500 10.500 5.500 17.500S10.500 30 18 30c5.500 0 9.500-2.500 11.500-7.500h-7c-1 1.500-2.300 2.300-4.500 2.300-3.500 0-5-2.300-5-5.300z" fill="#4cc4f2" stroke="#0f74b8" />
    <path d="M13 14.500c.4-2.900 2.300-4.500 5-4.500s4.500 1.600 4.900 4.500z" fill="#a58295" stroke="#0f74b8" strokeWidth=".6" />
    <path d="M7 29.500C1 32 0 28 3 21 8 10 19 1.500 26.500 1c4.500 0 4.500 4 1.500 9 .5-5-1.500-6-5-4.500C15 9 7 18 5 24c-.7 2.500-.3 4.500 2 5.500z" fill="#f5c02e" stroke="#c98f12" strokeWidth=".6" />
  </svg>
);

const CalculatorIcon = () => (
  <svg width="24" height="32" viewBox="0 0 24 32">
    <rect x="1" y="1.500" width="22" height="29" rx="1.500" fill="#a9d3ea" stroke="#5e9abb" />
    <rect x="3" y="4" width="18" height="3" fill="#f4ab45" />
    <rect x="3.500" y="7.500" width="17" height="7" fill="#e3f0f7" stroke="#7199b0" />
    <rect x="15.500" y="9" width="3" height="4" fill="none" stroke="#456" />
    <path d="M4 18.500h16M4 21.500h16M4 24.500h16M4 27.500h16" stroke="#4e84a8" strokeWidth="2" strokeDasharray="2 1" />
    <path d="M18.500 23v6" stroke="#f08a24" strokeWidth="2" />
  </svg>
);

const ChromeIcon = () => (
  <svg width="32" height="32" viewBox="0 0 32 32">
    <circle cx="16" cy="16" r="14.500" fill="#f6cf3e" />
    <path d="M3.500 8.500A14.500 14.500 0 0 1 28.600 8.700H16a7.200 7.200 0 0 0-6.300 3.700z" fill="#dd4b3e" />
    <path d="M3.500 8.500A14.500 14.500 0 0 0 15 30.500l6.300-10.800A7.200 7.200 0 0 1 9.700 19.500z" fill="#2f9e57" />
    <circle cx="16" cy="16" r="7" fill="#fff" />
    <circle cx="16" cy="16" r="5.600" fill="#4b87ee" />
  </svg>
);

interface OfficeIconProps {
  letter: string;
  color: string;
  light: string;
  font: string;
}

const OfficeIcon = ({ letter, color, light, font }: OfficeIconProps) => (
  <svg width="32" height="32" viewBox="0 0 32 32">
    <path d="M8 1.500h21.500v28H1.500V8q0-6.500 6.500-6.500z" fill={light} stroke={color} />
    <path d="M8.500 3H22v25H3V8.500Q3 3 8.500 3z" fill="#fff" opacity=".8" />
    <path d="M18 14l12.500 3.500L28 30l-15-1z" fill="#fff" stroke={light} strokeWidth=".6" />
    <path d="M19 19l9 2.500M18 22l9 2.500M17 25l9 2" stroke={color} opacity=".55" />
    <text x="12" y="20" textAnchor="middle" fontFamily={font} fontWeight="700" fontSize="22" fill={color} stroke={color} strokeWidth=".8">{letter}</text>
  </svg>
);

const CAL_ROWS = ['RBBBBBR', 'RRRRRRR', 'WWRRRWW', 'WWWWWWW', 'WBBBBBB', 'WBBBBBB', 'WBWBBBW'];
const CAL_FILL: Record<string, string> = { R: '#f00', B: '#00f', W: '#fff' };

const CalendarIcon = () => (
  <svg width="30" height="30" viewBox="0 0 30 30" shapeRendering="crispEdges">
    <rect x="1" y="1" width="29" height="29" fill="#7e7f86" />
    <rect width="29" height="29" fill="#c4c4c8" />
    {CAL_ROWS.map((row, y) =>
      row.split('').map((c, x) => <rect key={`${x}-${y}`} x={x * 4 + 1} y={y * 4 + 1} width="3" height="3" fill={CAL_FILL[c]} />)
    )}
  </svg>
);

const SkypeIcon = () => (
  <svg width="32" height="32" viewBox="0 0 32 32">
    <circle cx="9" cy="9" r="8" fill="#12a5e8" />
    <circle cx="16" cy="16" r="14" fill="#12a5e8" />
    <text x="15" y="24" textAnchor="middle" fontFamily="Liberation Sans" fontWeight="700" fontSize="23" fill="#fff">S</text>
    <circle cx="24" cy="24" r="7.500" fill="#1178ad" />
    <path d="M20.500 23.500a3.500 3.500 0 0 1 6-2M27.500 24.500a3.500 3.500 0 0 1-6 2M27 19v3h-3M21 29v-3h3" fill="none" stroke="#fff" />
  </svg>
);

const WinRarIcon = () => (
  <svg width="32" height="32" viewBox="0 0 32 32">
    <path d="M2 21l16 5 13-6v5l-13 6-16-5z" fill="#2fa045" stroke="#19602a" strokeWidth=".7" />
    <path d="M2 14l16 5 13-6v5l-13 6-16-5z" fill="#3d62c4" stroke="#223a80" strokeWidth=".7" />
    <path d="M2 7l16 5 13-6v5l-13 6-16-5z" fill="#d8432f" stroke="#8a2217" strokeWidth=".7" />
    <path d="M2 7L15 1l16 5-13 6z" fill="#ef7b62" stroke="#8a2217" strokeWidth=".7" />
    <path d="M18 15l12-5M18 22l12-5M18 29l12-5" stroke="#f2efe8" strokeWidth="1.500" />
    <path d="M6 8v19l5 2V10l12-5.500-4-1.500z" fill="#a5642a" stroke="#67390f" strokeWidth=".6" />
    <rect x="6.500" y="13" width="5" height="6" fill="none" stroke="#f2c43c" strokeWidth="1.600" />
  </svg>
);

const TASKS = [
  { label: 'Проводник', icon: <ExplorerIcon />, state: 'open' },
  { label: 'Internet Explorer', icon: <IeIcon />, state: '' },
  { label: 'Калькулятор', icon: <CalculatorIcon />, state: '' },
  { label: 'Chrome', icon: <ChromeIcon />, state: 'open' },
  { label: 'Word', icon: <OfficeIcon letter="W" color="#1f4f9e" light="#8fb9ea" font="Liberation Serif" />, state: 'stack' },
  { label: 'Excel', icon: <OfficeIcon letter="X" color="#22773a" light="#8fcb85" font="Liberation Sans" />, state: 'active' },
  { label: 'PowerPoint', icon: <OfficeIcon letter="P" color="#d1511f" light="#f3976a" font="Liberation Serif" />, state: '' },
  { label: 'OneNote', icon: <OfficeIcon letter="N" color="#77288a" light="#cf98d8" font="Liberation Serif" />, state: '' },
  { label: 'Календарь', icon: <CalendarIcon />, state: '' },
  { label: 'Skype', icon: <SkypeIcon />, state: 'open' },
  { label: 'WinRAR', icon: <WinRarIcon />, state: 'open' },
];

const TASK_STYLE: Record<string, string> = {
  '': 'border border-transparent w-[60px]',
  open: 'w-[60px] border border-[#cdb3c0] bg-white/15',
  stack: 'mr-[9px] w-[51px] border border-[#cdb3c0] bg-white/15 shadow-[3px_0_0_-1px_#a58092,4px_0_0_-1px_#cdb3c0,7px_0_0_-1px_#a58092,8px_0_0_-1px_#cdb3c0]',
  active: 'w-[60px] border border-[#f0e5ea] bg-white/40',
};

const Taskbar = () => (
  <footer className="flex h-10 shrink-0 items-center bg-[linear-gradient(90deg,transparent_0,transparent_calc(100%_-_190px),#8e3f4f80_calc(100%_-_155px),transparent_calc(100%_-_130px)),linear-gradient(#a88494,#9c7a8b)] text-[11px] text-white">
    <button aria-label="Пуск" className="ml-2 flex w-[34px] justify-center">
      <svg width="28" height="26" viewBox="0 0 28 26"><path d="M0 4l11.500-1.600V12.400H0zM12.500 2.200L27 0v12.400H12.500zM0 13.400h11.500v10L0 21.800zM12.500 13.400H27V26l-14.500-2.300z" fill="#fff" /></svg>
    </button>
    <div className="ml-[9px] flex h-full gap-[2px]">
      {TASKS.map((t) => (
        <button key={t.label} aria-label={t.label} className={`flex h-[39px] items-center justify-center ${TASK_STYLE[t.state]}`}>
          {t.icon}
        </button>
      ))}
    </div>
    <span className="flex-1" />
    <button>Рабочий стол</button>
    <button aria-label="Развернуть панель" className="ml-2 self-start pt-[6px]">
      <svg width="9" height="6" viewBox="0 0 9 6"><path d="M1 .5L3.500 3 1 5.500M5 .5L7.500 3 5 5.500" fill="none" stroke="#fff" strokeWidth="1.400" /></svg>
    </button>
    <button aria-label="Скрытые значки" className="ml-[11px]">
      <svg width="9" height="5" viewBox="0 0 9 5"><path d="M0 5h9L4.500 0z" fill="#fff" /></svg>
    </button>
    <button aria-label="Питание" className="ml-3">
      <svg width="17" height="17" viewBox="0 0 17 17">
        <rect x="7.500" y="2.500" width="7" height="13" fill="#56454f" stroke="#ddd" />
        <path d="M2 1v4M6 1v4" stroke="#fff" strokeWidth="1.500" />
        <path d="M0 5h8v3q-1 2-3 2v6H3v-6Q1 10 0 8z" fill="#fff" stroke="#333" strokeWidth=".5" />
        <path d="M9 9l7 7M16 9l-7 7" stroke="#e02a2a" strokeWidth="2.400" />
      </svg>
    </button>
    <button aria-label="Громкость" className="ml-[9px]">
      <svg width="14" height="16" viewBox="0 0 14 16"><path d="M.5 5h3L7.500 1v14l-4-4h-3z" fill="#fff" stroke="#333" strokeWidth=".6" /><path d="M10 5q2 3 0 6" fill="none" stroke="#fff" strokeWidth="1.400" /></svg>
    </button>
    <button aria-label="Центр поддержки" className="ml-2">
      <svg width="18" height="17" viewBox="0 0 18 17">
        <path d="M1.500 1v15" stroke="#fff" strokeWidth="2" />
        <path d="M3 2q3-1.500 5 0t6 0v7H3z" fill="#fff" stroke="#333" strokeWidth=".5" />
        <circle cx="11.500" cy="11" r="5" fill="#333" stroke="#fff" />
        <path d="M11.500 8v3.500l2 1.500" fill="none" stroke="#fff" />
      </svg>
    </button>
    <button className="ml-[13px]">РУС</button>
    <button className="w-[91px] text-center leading-[17px]">
      11:57
      <br />
      15.08.2018
    </button>
  </footer>
);

export default function App() {
  return (
    <div className="flex h-screen flex-col overflow-hidden bg-white font-['Noto_Sans','Open_Sans',sans-serif]">
      <header className="flex h-[49px] shrink-0 flex-col border-b border-[#b3b8bd] bg-linear-to-b from-[#d566a1] via-[#eab4d2] to-[#fdf4f9]">
        <TitleBar />
        <TabRow />
      </header>
      <Ribbon />
      <FormulaBar />
      <main className="flex min-h-0 flex-1 border-t border-[#8b8fa0]">
        <Sheet />
        <VerticalScroll />
      </main>
      <SheetBar />
      <StatusBar />
      <Taskbar />
    </div>
  );
}
